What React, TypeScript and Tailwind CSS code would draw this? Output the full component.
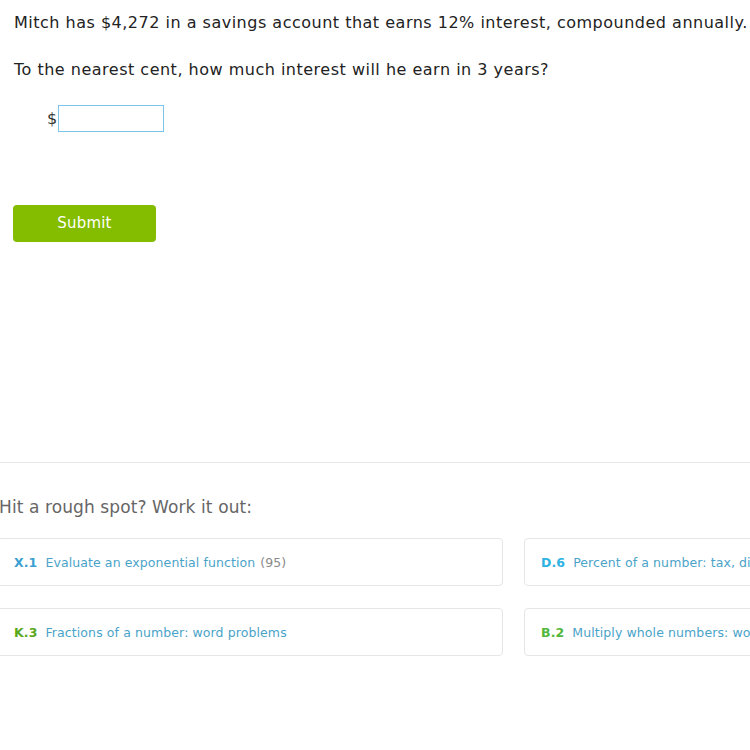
import React from 'react';

type Skill = {
  code: string;
  name: string;
  count?: number;
  codeColor: string;
};

const skills: Skill[] = [
  { code: 'X.1', name: 'Evaluate an exponential function', count: 95, codeColor: 'text-[#3a9fd1]' },
  { code: 'D.6', name: 'Percent of a number: tax, discount, and more', codeColor: 'text-[#2eb2e2]' },
  { code: 'K.3', name: 'Fractions of a number: word problems', codeColor: 'text-[#5aa81c]' },
  { code: 'B.2', name: 'Multiply whole numbers: word problems', codeColor: 'text-[#52b83c]' },
];

function SkillCard({ skill }: { skill: Skill }) {
  return (
    <div className="w-[506px] shrink-0 h-[48px] flex items-center pt-[3px] px-[16px] border border-[#e6e6e6] rounded-[4px] bg-white whitespace-nowrap overflow-hidden text-[12.5px] tracking-[0.1px]">
      <span className={`font-bold ${skill.codeColor}`}>{skill.code}</span>
      <span className="ml-[8px] text-[#4aa3c9]">{skill.name}</span>
      {skill.count !== undefined && <span className="ml-[5px] text-[#8a8a8a]">({skill.count})</span>}
    </div>
  );
}

export default function App() {
  return (
    <div className="w-[750px] h-[750px] overflow-hidden bg-white text-[#222]" style={{ fontFamily: '"DejaVu Sans", Verdana, sans-serif' }}>
      <div className="pl-[14px] pt-[12px]">
        <p className="text-[16px] tracking-[0.5px] whitespace-nowrap leading-[22px]">
          Mitch has $4,272 in a savings account that earns 12% interest, compounded annually.
        </p>
        <p className="text-[16px] tracking-[0.5px] whitespace-nowrap leading-[22px] mt-[25px]">
          To the nearest cent, how much interest will he earn in 3 years?
        </p>
        <div className="flex items-center mt-[24px] ml-[33px]">
          <span className="text-[16px] text-[#333]">$</span>
          <input
            type="text"
            className="ml-[1px] w-[106px] h-[27px] border border-[#7cc4ec] outline-none px-1 text-[15px]"
          />
        </div>
        <button
          type="button"
          className="mt-[73px] -ml-[1px] w-[143px] h-[37px] rounded-[4px] bg-[#84bd00] text-white text-[15px] tracking-[0.2px]"
        >
          Submit
        </button>
      </div>

      <div className="mt-[220px] border-t border-[#e8e8e8]" />

      <div className="-ml-[3px] pt-[32px]">
        <p className="ml-[2px] text-[17px] text-[#666] leading-[24px] tracking-[0.1px]">Hit a rough spot? Work it out:</p>
        <div className="mt-[19px] flex flex-col gap-[22px]">
          <div className="flex gap-[21px]">
            <SkillCard skill={skills[0]} />
            <SkillCard skill={skills[1]} />
          </div>
          <div className="flex gap-[21px]">
            <SkillCard skill={skills[2]} />
            <SkillCard skill={skills[3]} />
          </div>
        </div>
      </div>
    </div>
  );
}
